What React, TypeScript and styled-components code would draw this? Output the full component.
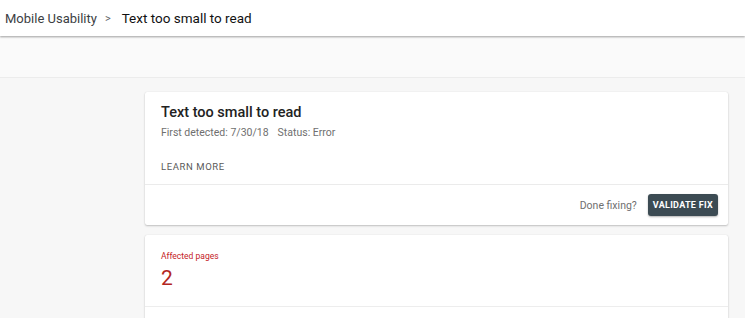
import React from 'react';
import styled, { createGlobalStyle } from 'styled-components';

const GlobalStyle = createGlobalStyle`
  html, body {
    margin: 0;
    padding: 0;
    background: #f7f7f7;
    font-family: Roboto, "Liberation Sans", Arial, sans-serif;
  }
`;

const Header = styled.header`
  height: 36px;
  background: #ffffff;
  display: flex;
  align-items: center;
  padding-left: 5px;
  font-size: 13px;
  box-shadow: 0 1px 2px rgba(0, 0, 0, 0.35);
  position: relative;
  z-index: 1;
`;

const Crumb = styled.span<{ $current?: boolean }>`
  color: ${(p) => (p.$current ? '#111111' : '#3c4043')};
  font-size: ${(p) => (p.$current ? '13.5px' : '13px')};
  font-weight: 400;
`;

const Chevron = styled.span`
  color: #5f6368;
  font-size: 11px;
  margin: 0 11px 0 8px;
`;

const Band = styled.div`
  height: 39px;
  margin-top: 2px;
  background: #fafafa;
  border-bottom: 1px solid #ececec;
`;

const Main = styled.main`
  padding: 14px 17px 0 145px;
  display: flex;
  flex-direction: column;
  gap: 10px;
`;

const Card = styled.section`
  background: #ffffff;
  border-radius: 2px;
  box-shadow: 0 1px 2px rgba(0, 0, 0, 0.22), 0 0 1px rgba(0, 0, 0, 0.12);
`;

const CardBody = styled.div`
  padding: 11px 16px 0 16px;
`;

const Title = styled.h2`
  margin: 0;
  font-size: 14.5px;
  font-weight: 500;
  color: #222222;
  line-height: 20px;
`;

const Meta = styled.div`
  margin-top: 3px;
  font-size: 10.5px;
  color: #6f6f6f;
  display: flex;
  gap: 9px;
`;

const LearnMore = styled.div`
  margin-top: 22px;
  padding-bottom: 12px;
  font-size: 9.5px;
  letter-spacing: 0.6px;
  color: #5a5a5a;
  font-weight: 400;
`;

const Footer = styled.div`
  border-top: 1px solid #ebebeb;
  height: 40px;
  display: flex;
  align-items: center;
  justify-content: flex-end;
  padding-right: 10px;
  gap: 11px;
`;

const Hint = styled.span`
  font-size: 10.5px;
  color: #6f6f6f;
`;

const Button = styled.button`
  background: #3c4b53;
  color: #ffffff;
  border: none;
  border-radius: 3px;
  height: 22px;
  padding: 0 5px;
  font-family: inherit;
  font-size: 9px;
  font-weight: 700;
  letter-spacing: 0.3px;
  box-shadow: 0 1px 2px rgba(0, 0, 0, 0.3);
`;

const StatBody = styled.div`
  padding: 16px 16px 15px 16px;
  border-bottom: 1px solid #ededed;
`;

const StatLabel = styled.div`
  font-size: 8.5px;
  line-height: 10px;
  color: #c5221f;
`;

const StatValue = styled.div`
  font-size: 21px;
  color: #b3261e;
  line-height: 26px;
  margin-top: 4px;
`;

const StatRest = styled.div`
  height: 40px;
`;

const App = () => {
  return (
    <>
      <GlobalStyle />
      <Header>
        <Crumb>Mobile Usability</Crumb>
        <Chevron>&gt;</Chevron>
        <Crumb $current>Text too small to read</Crumb>
      </Header>
      <Band />
      <Main>
        <Card>
          <CardBody>
            <Title>Text too small to read</Title>
            <Meta>
              <span>First detected: 7/30/18</span>
              <span>Status: Error</span>
            </Meta>
            <LearnMore>LEARN MORE</LearnMore>
          </CardBody>
          <Footer>
            <Hint>Done fixing?</Hint>
            <Button>VALIDATE FIX</Button>
          </Footer>
        </Card>
        <Card>
          <StatBody>
            <StatLabel>Affected pages</StatLabel>
            <StatValue>2</StatValue>
          </StatBody>
          <StatRest />
        </Card>
      </Main>
    </>
  );
};

export default App;
